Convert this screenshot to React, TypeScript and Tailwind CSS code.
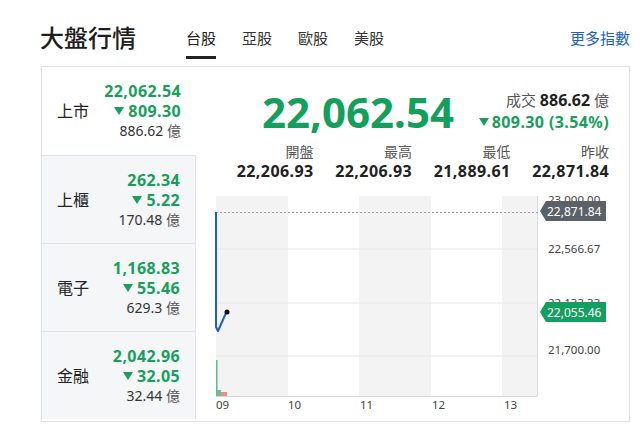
import React from 'react'

const FONT = { fontFamily: '"Noto Sans", "Noto Sans CJK TC", sans-serif' }

const MARKETS = [
  { label: '上市', price: '22,062.54', change: '809.30', volume: '886.62' },
  { label: '上櫃', price: '262.34', change: '5.22', volume: '170.48' },
  { label: '電子', price: '1,168.83', change: '55.46', volume: '629.3' },
  { label: '金融', price: '2,042.96', change: '32.05', volume: '32.44' },
]

const STATS = [
  { label: '開盤', value: '22,206.93' },
  { label: '最高', value: '22,206.93' },
  { label: '最低', value: '21,889.61' },
  { label: '昨收', value: '22,871.84' },
]

function Down({ className = '' }: { className?: string }) {
  return (
    <svg width="10" height="8" viewBox="0 0 10 8" className={className}>
      <path d="M0 0h10L5 8z" fill="currentColor" />
    </svg>
  )
}

function Chart() {
  const bands = [
    [1, 72],
    [144, 72],
    [287, 35],
  ]
  return (
    <svg width="394" height="228" viewBox="0 0 394 228" className="block overflow-visible">
      {bands.map(([x, w]) => (
        <rect key={x} x={x} y={10} width={w} height={200} fill="#f3f3f3" />
      ))}
      {[63, 117, 170].map((y) => (
        <line key={y} x1={1} x2={322} y1={y} y2={y} stroke="#e6e6e6" strokeWidth="1" />
      ))}
      <line x1={322.5} x2={322.5} y1={10} y2={210} stroke="#dcdcdc" />
      <line x1={1} x2={322} y1={210.5} y2={210.5} stroke="#d4d4d4" />

      {/* volume */}
      <rect x={1} y={174} width={1.5} height={36} fill="#5fb98a" />
      <rect x={2} y={204} width={4} height={6} fill="#6cbf93" />
      <rect x={6} y={206} width={6} height={4} fill="#ee8a8a" />

      {/* prev close */}
      <line x1={1} x2={325} y1={26.5} y2={26.5} stroke="#a0a0a0" strokeDasharray="2 2" />

      {/* price line */}
      <polyline
        points="1,26 1,141 3,145 11,127"
        fill="none"
        stroke="#1f5fc4"
        strokeWidth="2"
        strokeLinejoin="round"
      />
      <circle cx={12} cy={126} r={2.5} fill="#111" />

      {/* y axis */}
      <g fontSize="11.5" fill="#444">
        <text x={333} y={18}>23,000.00</text>
        <text x={333} y={67}>22,566.67</text>
        <text x={333} y={121}>22,133.33</text>
        <text x={333} y={168}>21,700.00</text>
      </g>

      <path d="M325 25 L331 15 H391 V35 H331 Z" fill="#5b6168" />
      <text x={332} y={29.5} fontSize="12" fill="#fff">22,871.84</text>
      <path d="M325 126 L331 116 H391 V136 H331 Z" fill="#11a05d" />
      <text x={332} y={130.5} fontSize="12" fill="#fff">22,055.46</text>

      <g fontSize="11.5" fill="#444">
        <text x={1} y={223}>09</text>
        <text x={73} y={223}>10</text>
        <text x={145} y={223}>11</text>
        <text x={217} y={223}>12</text>
        <text x={289} y={223}>13</text>
      </g>
    </svg>
  )
}

export default function App() {
  return (
    <div className="w-[640px] h-[443px] bg-white overflow-hidden pl-[41px]" style={FONT}>
      {/* Header */}
      <div className="h-[66px] w-[589px] flex items-start">
        <h1 className="mt-[21px] -ml-px text-[24px] leading-[34px] font-medium text-[#1d1d1d]">大盤行情</h1>
        <nav className="ml-[50px] mt-[28px] flex gap-[26px]">
          {['台股', '亞股', '歐股', '美股'].map((t, i) => (
            <span
              key={t}
              className={
                i === 0
                  ? 'text-[15px] leading-[20px] pb-[8px] border-b-[3px] border-[#222] text-[#222]'
                  : 'text-[15px] leading-[20px] pb-[8px] border-b-[3px] border-transparent text-[#333]'
              }
            >
              {t}
            </span>
          ))}
        </nav>
        <a className="ml-auto mt-[28px] text-[15px] leading-[20px] text-[#1e5fc6]">更多指數</a>
      </div>

      {/* Card */}
      <div className="flex h-[356px] w-[589px] border border-[#e2e2e2]">
        <div className="w-[155px] flex flex-col">
          {MARKETS.map((m, i) => (
            <div
              key={m.label}
              className={
                i === 0
                  ? 'h-[88px] flex items-center justify-between px-[15px] bg-white'
                  : 'h-[88px] flex items-center justify-between px-[15px] bg-[#f5f6f8] border-t border-r border-[#e1e3e6]'
              }
            >
              <span className="text-[16px] text-[#222]">{m.label}</span>
              <div className="text-right">
                <div className="text-[16px] leading-[20px] tracking-[0.4px] font-bold text-[#17a05d]">{m.price}</div>
                <div className="text-[16px] leading-[20px] tracking-[0.4px] font-bold text-[#17a05d] flex items-center justify-end">
                  <Down className="mr-[4px]" />
                  {m.change}
                </div>
                <div className="text-[14px] leading-[20px] text-[#333]">
                  {m.volume} <span className="text-[#555]">億</span>
                </div>
              </div>
            </div>
          ))}
        </div>

        <div className="flex-1 pl-[19px] pr-[20px]">
          <div className="flex justify-between items-start">
            <div className="ml-[47px] mt-[20px] text-[42px] leading-[50px] font-bold text-[#12a05c]">22,062.54</div>
            <div className="mt-[22px] text-right">
              <div className="text-[15px] leading-[22px] text-[#555]">
                成交 <span className="font-bold text-[#222] text-[16px]">886.62</span> 億
              </div>
              <div className="text-[16px] leading-[22px] tracking-[0.4px] font-bold text-[#17a05d] flex items-center justify-end">
                <Down className="mr-[3px]" />
                809.30 (3.54%)
              </div>
            </div>
          </div>

          <div className="grid grid-cols-4 mt-[5px] text-right">
            {STATS.map((s) => (
              <div key={s.label}>
                <div className="text-[14px] leading-[19px] text-[#555]">{s.label}</div>
                <div className="text-[16px] leading-[20px] tracking-[0.4px] font-bold text-[#222]">{s.value}</div>
              </div>
            ))}
          </div>

          <div className="mt-[5px]">
            <Chart />
          </div>
        </div>
      </div>
    </div>
  )
}
